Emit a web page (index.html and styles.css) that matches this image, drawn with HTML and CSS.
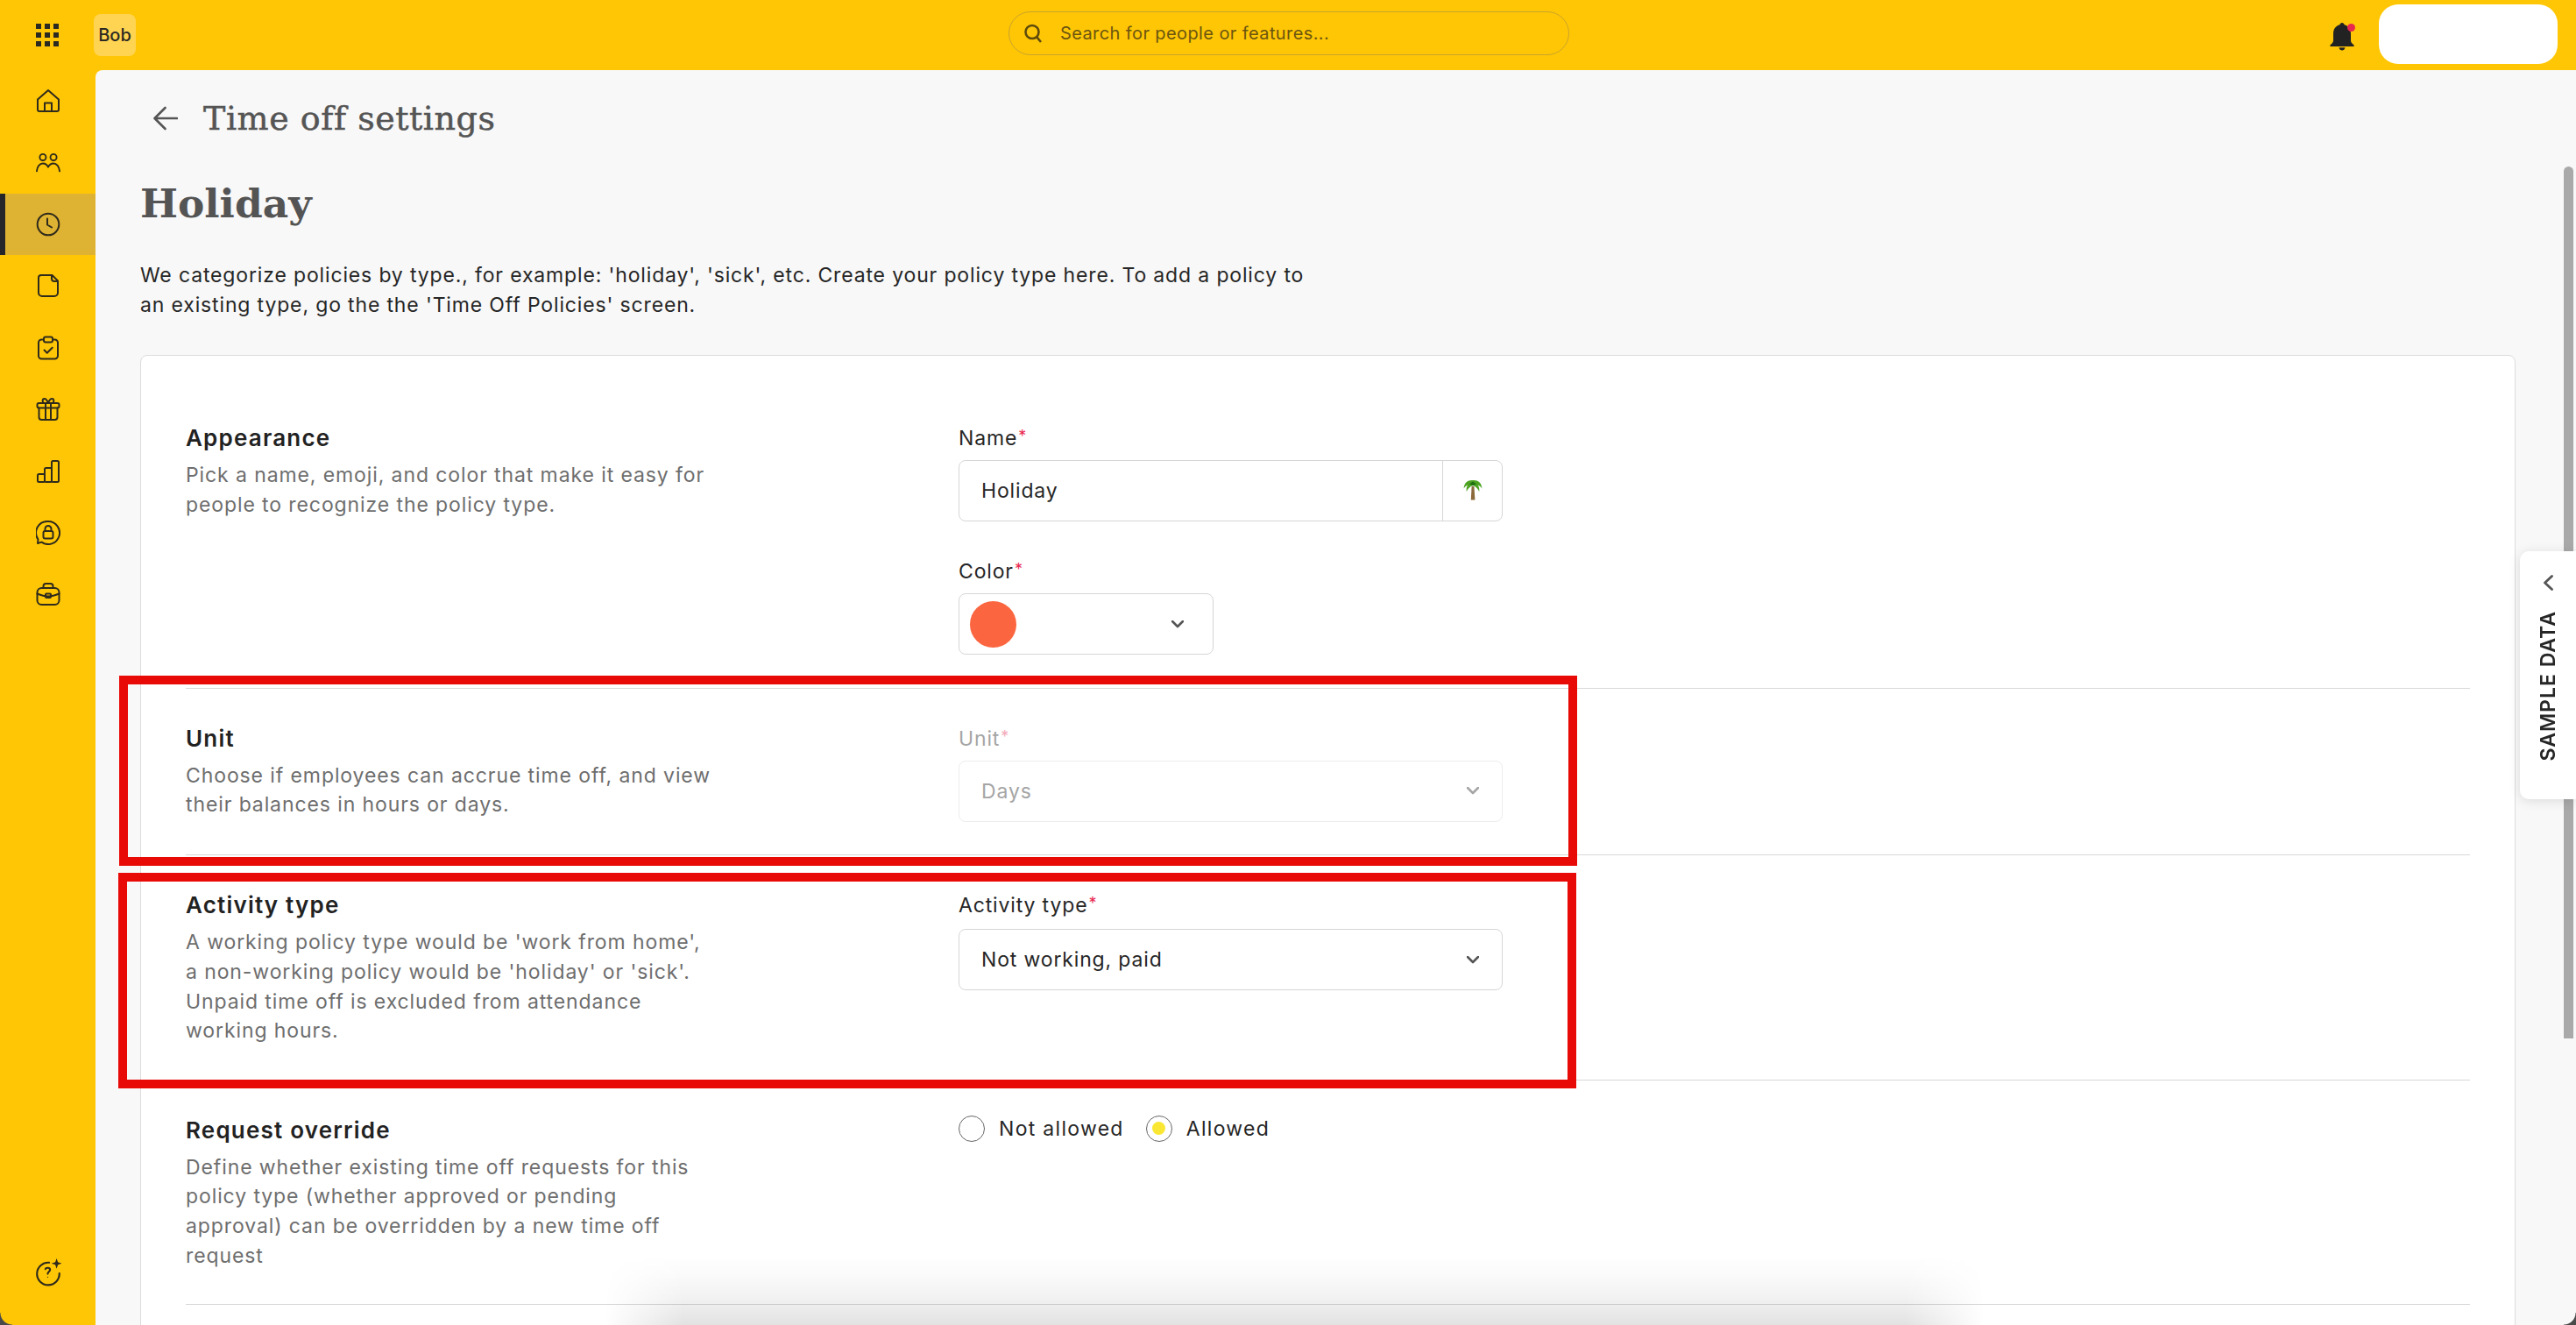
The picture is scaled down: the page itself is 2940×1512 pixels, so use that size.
FILE: index.html
```html
<!DOCTYPE html>
<html lang="en">
<head>
<meta charset="utf-8">
<title>Time off settings</title>
<link rel="stylesheet" href="styles.css">
</head>
<body>
<div class="app">
  <header class="topbar">
    <div class="apps">
      <svg class="grid-icon" viewBox="0 0 26 26" width="26" height="26"><g fill="#2b2a22"><rect x="0" y="0" width="6" height="6"/><rect x="10" y="0" width="6" height="6"/><rect x="20" y="0" width="6" height="6"/><rect x="0" y="10" width="6" height="6"/><rect x="10" y="10" width="6" height="6"/><rect x="20" y="10" width="6" height="6"/><rect x="0" y="20" width="6" height="6"/><rect x="10" y="20" width="6" height="6"/><rect x="20" y="20" width="6" height="6"/></g></svg>
    </div>
    <div class="logo">Bob</div>
    <div class="search">
      <svg viewBox="0 0 24 24" width="24" height="24" class="search-icon"><circle cx="11" cy="10.5" r="7.5"/><path d="M16.2 16.2 21 22"/></svg>
      <span>Search for people or features...</span>
    </div>
    <div class="top-right">
      <div class="bell">
        <svg viewBox="0 0 28 32" width="28" height="32"><path fill="#222" d="M14 0c1.5 0 2.4 1 2.6 2.3C21.500 3.600 24 7.500 24 12.500V20c0 2 1 3.500 3.600 5.600V27H.4v-1.400C3 23.500 4 22 4 20v-7.500c0-5 2.500-8.900 7.400-10.200C11.600 1 12.500 0 14 0Z"/><path fill="#222" d="M10.500 28.200h7c-.3 2-1.800 3.300-3.500 3.300s-3.200-1.300-3.500-3.300Z"/></svg>
        <span class="bell-dot"></span>
      </div>
      <div class="user-box"></div>
    </div>
  </header>
  <div class="body">
    <nav class="sidebar">
      <a class="nav-item"><svg class="nav-icon" viewBox="0 0 28 28"><path d="M2 12.500 14 2l12 10.500V24a2 2 0 0 1-2 2H4a2 2 0 0 1-2-2Z"/><path d="M10 26v-9.500h8V26"/></svg></a>
      <a class="nav-item"><svg class="nav-icon" viewBox="0 0 30 28"><circle cx="8.500" cy="7" r="3.800"/><circle cx="21.500" cy="7" r="3.800"/><path d="M1 24c.5-6 3.800-9.500 7.500-9.500 3 0 5.300 1.800 6.500 4.500 1.200-2.700 3.500-4.500 6.500-4.500 3.700 0 7 3.500 7.500 9.500"/></svg></a>
      <a class="nav-item active"><svg class="nav-icon" viewBox="0 0 28 28"><circle cx="14" cy="14" r="12.300"/><path d="M13 7.500V14.500l5 3"/></svg></a>
      <a class="nav-item"><svg class="nav-icon" viewBox="0 0 28 28"><path d="M6 2h12.500L25 8.500V22a4 4 0 0 1-4 4H7a4 4 0 0 1-4-4V5a3 3 0 0 1 3-3Z"/><path d="M18 2.500V6a3 3 0 0 0 3 3h4"/></svg></a>
      <a class="nav-item"><svg class="nav-icon" viewBox="0 0 28 28"><path d="M9 4.500H6.500A3.500 3.500 0 0 0 3 8v15a3.500 3.500 0 0 0 3.500 3.500h15A3.500 3.500 0 0 0 25 23V8a3.500 3.500 0 0 0-3.500-3.500H19"/><rect x="9" y="1.500" width="10" height="6" rx="2"/><path d="m9.500 16.500 3.200 3.200 6-6"/></svg></a>
      <a class="nav-item"><svg class="nav-icon" viewBox="0 0 28 28"><rect x="1.500" y="7" width="25" height="5.500" rx="2"/><path d="M3.500 12.500V23a3 3 0 0 0 3 3h15a3 3 0 0 0 3-3V12.500"/><path d="M11 7v19M17 7v19"/><path d="M14 7c-1-3-2.500-5-4.500-5S7 4.500 8.500 7M14 7c1-3 2.500-5 4.500-5S21 4.500 19.500 7"/></svg></a>
      <a class="nav-item"><svg class="nav-icon" viewBox="0 0 28 28"><rect x="2" y="17" width="8" height="9" rx="1.500"/><rect x="10" y="10" width="8" height="16" rx="1.500"/><rect x="18" y="2" width="8" height="24" rx="1.500"/></svg></a>
      <a class="nav-item"><svg class="nav-icon" viewBox="0 0 28 28"><path d="M14 1a13 13 0 1 1-7.500 23.600L2 26l.5-4.500A13 13 0 0 1 14 1Z"/><rect x="8.500" y="12" width="11" height="8.500" rx="2"/><path d="M10.500 12V9.500a3.500 3.500 0 0 1 7 0V12"/></svg></a>
      <a class="nav-item"><svg class="nav-icon" viewBox="0 0 28 28"><rect x="1.500" y="7" width="25" height="19" rx="5"/><path d="M8.500 7V5a3 3 0 0 1 3-3h5a3 3 0 0 1 3 3v2"/><path d="M1.500 13.500c6 2.500 8 3 12.500 3s6.500-.5 12.500-3"/><rect x="11" y="13.500" width="6" height="4.500" rx="1"/></svg></a>
      <a class="nav-item help"><svg class="nav-icon help-icon" viewBox="0 0 30 30"><path d="M16 4.500A12 12 0 1 0 27 16" /><path d="M12 11.500c.4-2 4.800-2 5 .5.200 2-2.500 2-2.500 4.500"/><circle class="nav-fill" cx="14.500" cy="20" r=".6"/><path class="nav-fill" d="M24 0l1.400 4.100L29.500 5.500l-4.100 1.400L24 11l-1.400-4.100L18.500 5.500l4.100-1.400Z"/></svg></a>
    </nav>
    <main class="main">
      <div class="page-head">
        <svg class="back" viewBox="0 0 28 28" width="28" height="28"><path d="M27 14H2M13.500 2 1.500 14l12 12"/></svg>
        <div class="page-title">Time off settings</div>
      </div>
      <h1 class="heading">Holiday</h1>
      <p class="intro">We categorize policies by type., for example: 'holiday', 'sick', etc. Create your policy type here. To add a policy to<br>an existing type, go the the 'Time Off Policies' screen.</p>
      <section class="card">
        <div class="row">
          <div>
            <h2 class="row-title">Appearance</h2>
            <p class="row-desc">Pick a name, emoji, and color that make it easy for<br>people to recognize the policy type.</p>
          </div>
          <div>
            <label class="field-label">Name<span class="req">*</span></label>
            <div class="input">
              <span class="input-text">Holiday</span>
              <span class="emoji-cell">
                <svg viewBox="0 0 22 24" width="22" height="24"><path fill="#8a6a3a" d="M9.600 8h2.800l1 15.500H8.800Z"/><path fill="#4da322" d="M11 1C6 .5 1 3 .6 10.500c1.800-2.800 3-3.600 4.400-3.800C3.800 8.800 3.300 11 3.800 14c1.500-3.500 3.800-5.800 7.200-7 3.400 1.200 5.700 3.500 7.200 7 .5-3-.2-5.200-1.400-7.300 1.400.2 2.800 1 4.600 3.800C21 3 16 .5 11 1Z"/><path fill="#1f6e10" d="M11 2.500 7 5.200l4 2 4-2Z"/></svg>
              </span>
            </div>
            <label class="field-label second">Color<span class="req">*</span></label>
            <div class="select color-select">
              <span class="swatch"></span>
              <svg class="chev" viewBox="0 0 14 9" width="14" height="9"><path d="m1 1 6 6 6-6"/></svg>
            </div>
          </div>
        </div>
        <div class="row">
          <div>
            <h2 class="row-title">Unit</h2>
            <p class="row-desc">Choose if employees can accrue time off, and view<br>their balances in hours or days.</p>
          </div>
          <div class="disabled">
            <label class="field-label">Unit<span class="req">*</span></label>
            <div class="select wide">
              <span>Days</span>
              <svg class="chev" viewBox="0 0 14 9" width="14" height="9"><path d="m1 1 6 6 6-6"/></svg>
            </div>
          </div>
        </div>
        <div class="row">
          <div>
            <h2 class="row-title">Activity type</h2>
            <p class="row-desc">A working policy type would be 'work from home',<br>a non-working policy would be 'holiday' or 'sick'.<br>Unpaid time off is excluded from attendance<br>working hours.</p>
          </div>
          <div>
            <label class="field-label roomy">Activity type<span class="req">*</span></label>
            <div class="select wide">
              <span>Not working, paid</span>
              <svg class="chev" viewBox="0 0 14 9" width="14" height="9"><path d="m1 1 6 6 6-6"/></svg>
            </div>
          </div>
        </div>
        <div class="row">
          <div>
            <h2 class="row-title">Request override</h2>
            <p class="row-desc">Define whether existing time off requests for this<br>policy type (whether approved or pending<br>approval) can be overridden by a new time off<br>request</p>
          </div>
          <div class="radios">
            <span class="radio"></span><span class="radio-label">Not allowed</span>
            <span class="radio on"></span><span class="radio-label">Allowed</span>
          </div>
        </div>
      </section>
    </main>
  </div>
</div>
<div class="scroll-thumb"></div>
<aside class="sample-tab">
  <svg class="sample-chev" viewBox="0 0 12 18" width="12" height="18"><path d="M10.500 1.500 2.500 9l8 7.500"/></svg>
  <span class="sample-text">SAMPLE DATA</span>
</aside>
<div class="mark mark-unit"></div>
<div class="mark mark-activity"></div>
<div class="dock-shadow"></div>
<div class="corner corner-l"></div>
<div class="corner corner-r"></div>
</body>
</html>
```
FILE: styles.css
```css
* { box-sizing: border-box; }
html { margin: 0; height: 1512px; overflow: hidden; }
body {
  margin: 0;
  width: 2940px;
  height: 1512px;
  overflow: hidden;
  position: relative;
  font-family: "Inter", "Liberation Sans", sans-serif;
  color: #262626;
  background: #ffc605;
}
.app { display: flex; flex-direction: column; height: 1512px; }

/* top bar */
.topbar { height: 80px; display: flex; align-items: center; flex: none; }
.apps { width: 107px; display: flex; justify-content: center; }
.logo {
  width: 48px; height: 48px; border-radius: 8px;
  background: #ffd452; display: flex; align-items: center; justify-content: center;
  font-size: 20px; font-weight: 500; color: #2b2a22;
}
.search {
  margin-left: 996px; margin-bottom: 4px; width: 640px; height: 50px;
  border: 1px solid #c9a32c; border-radius: 25px;
  display: flex; align-items: center; padding-left: 15px; gap: 19px;
  font-size: 20px; color: #6b5510; letter-spacing: .4px;
}
.search-icon { fill: none; stroke: #5e4b0c; stroke-width: 2.6; }
.top-right { margin-left: auto; display: flex; align-items: center; padding-right: 21px; }
.bell { position: relative; width: 28px; height: 32px; margin-right: 28px; margin-top: 3px; }
.bell-dot {
  position: absolute; right: -1px; top: 1px; width: 9px; height: 9px;
  border-radius: 50%; background: #e8274f;
}
.user-box { width: 204px; height: 68px; border-radius: 22px; background: #fff; margin-bottom: 2px; }

/* body */
.body { flex: 1; display: flex; min-height: 0; }
.sidebar { width: 109px; flex: none; display: flex; flex-direction: column; }
.nav-item {
  height: 70.4px; flex: none; display: flex; align-items: center; justify-content: center;
  position: relative;
}
.nav-item.active { background: #deb232; }
.nav-item.active::before {
  content: ""; position: absolute; left: 0; top: 0; bottom: 0; width: 6px; background: #25252a;
}
.nav-item.help { margin-top: auto; margin-bottom: 25px; }
.nav-icon { width: 28px; height: 28px; fill: none; stroke: #2e2a1c; stroke-width: 2; stroke-linecap: round; stroke-linejoin: round; }
.help-icon { width: 32px; height: 32px; }
.nav-fill { fill: #2e2a1c; stroke: none; }

/* main */
.main {
  flex: 1; min-width: 0; background: #f8f8f8; border-top-left-radius: 8px;
  padding: 0 69px 0 51px; overflow: hidden;
}
.page-head { height: 110px; display: flex; align-items: center; padding-left: 15px; }
.back { fill: none; stroke: #555; stroke-width: 2.600; stroke-linecap: round; stroke-linejoin: round; }
.page-title {
  margin-left: 29px; font-family: "DejaVu Serif", serif;
  font-size: 38px; letter-spacing: .55px; color: #555; -webkit-text-stroke: .5px #555;
}
.heading {
  margin: 14px 0 0; font-family: "DejaVu Serif", serif;
  font-size: 45.5px; line-height: 56px; font-weight: 700; color: #545454;
}
.intro { margin: 38px 0 0; font-size: 23px; line-height: 33.75px; letter-spacing: .85px; color: #262626; }
.card {
  margin-top: 39.5px; background: #fff; border: 1px solid #dcdcdc; border-radius: 8px;
  padding: 37px 51px 400px;
}
.row {
  display: grid; grid-template-columns: 882px 1fr;
  padding: 40px 0 37.5px; border-bottom: 1.5px solid #d8d8d8;
}
.row-title { margin: 0 0 9px; font-size: 26px; line-height: 34px; font-weight: 600; letter-spacing: 1.2px; color: #222; }
.row-desc { margin: 0; font-size: 23px; line-height: 33.75px; letter-spacing: .9px; color: #6e6e6e; }
.field-label { display: block; font-size: 23px; line-height: 34px; letter-spacing: .85px; color: #262626; margin-bottom: 8px; }
.field-label.second { margin-top: 40px; }
.field-label.roomy { margin-bottom: 10px; }
.req { color: #e8274f; font-size: 18px; line-height: 0; vertical-align: 4px; margin-left: 1px; }
.input {
  width: 621px; height: 70px; border: 1.5px solid #d6d6d6; border-radius: 8px;
  display: flex; align-items: stretch;
}
.input-text { flex: 1; padding-left: 25px; display: flex; align-items: center; font-size: 23px; letter-spacing: .85px; }
.emoji-cell {
  width: 68px; border-left: 1.5px solid #d6d6d6; display: flex; align-items: center; justify-content: center;
  padding-bottom: 3px;
}
.select {
  height: 70px; border: 1.5px solid #d6d6d6; border-radius: 8px;
  display: flex; align-items: center; justify-content: space-between;
  font-size: 23px; letter-spacing: .85px;
}
.select.wide { width: 621px; padding: 0 26px 0 25px; }
.color-select { width: 291px; padding: 0 33px 0 12px; }
.swatch { width: 53px; height: 53px; border-radius: 50%; background: #fb6640; }
.chev { fill: none; stroke: #555; stroke-width: 2.600; stroke-linecap: round; stroke-linejoin: round; }
.disabled .field-label, .disabled .select { color: #a5a5a5; }
.disabled .select { border-color: #ececec; }
.disabled .req { color: #f3a9b9; }
.disabled .chev { stroke: #a5a5a5; }
.radios { display: flex; align-items: center; height: 30px; }
.radio {
  width: 30px; height: 30px; border-radius: 50%; border: 1.5px solid #666; background: #fff;
  display: flex; align-items: center; justify-content: center; margin-right: 16px; flex: none;
}
.radio.on::after { content: ""; width: 15px; height: 15px; border-radius: 50%; background: #f9e733; }
.radio-label { font-size: 23px; letter-spacing: 1.3px; margin-right: 25px; }

/* overlays */
.scroll-thumb {
  position: absolute; left: 2926px; top: 190px; width: 11px; height: 995px;
  border-radius: 6px 6px 0 0; background: #a9a9a9;
}
.sample-tab {
  position: absolute; right: 0; top: 629px; width: 64px; height: 283px;
  background: #fff; border-radius: 10px 0 0 10px;
  box-shadow: 0 2px 14px rgba(0, 0, 0, .12);
  display: flex; flex-direction: column; align-items: center; padding-top: 27px; gap: 23px;
}
.sample-chev { fill: none; stroke: #555; stroke-width: 2.800; stroke-linecap: round; stroke-linejoin: round; }
.sample-text {
  writing-mode: vertical-rl; transform: rotate(180deg);
  font-size: 23px; font-weight: 600; letter-spacing: 1px; color: #262626; line-height: 1;
}
.mark { position: absolute; border: 10px solid #e80a07; pointer-events: none; }
.mark-unit { left: 136px; top: 771px; width: 1664px; height: 217px; }
.mark-activity { left: 135px; top: 996px; width: 1664px; height: 246px; }
.dock-shadow {
  position: absolute; left: 690px; bottom: 0; width: 1575px; height: 80px; pointer-events: none;
  background: linear-gradient(to bottom, rgba(0, 0, 0, 0), rgba(0, 0, 0, .015) 25%, rgba(0, 0, 0, .05) 60%, rgba(0, 0, 0, .115));
  -webkit-mask-image: linear-gradient(to right, transparent, #000 90px, #000 calc(100% - 90px), transparent);
  mask-image: linear-gradient(to right, transparent, #000 90px, #000 calc(100% - 90px), transparent);
}
.corner { position: absolute; bottom: 0; width: 14px; height: 14px; }
.corner-l { left: 0; background: radial-gradient(circle at 100% 0, transparent 13px, #4a4a4a 14px); }
.corner-r { right: 0; background: radial-gradient(circle at 0 0, transparent 13px, #4a4a4a 14px); }
```
